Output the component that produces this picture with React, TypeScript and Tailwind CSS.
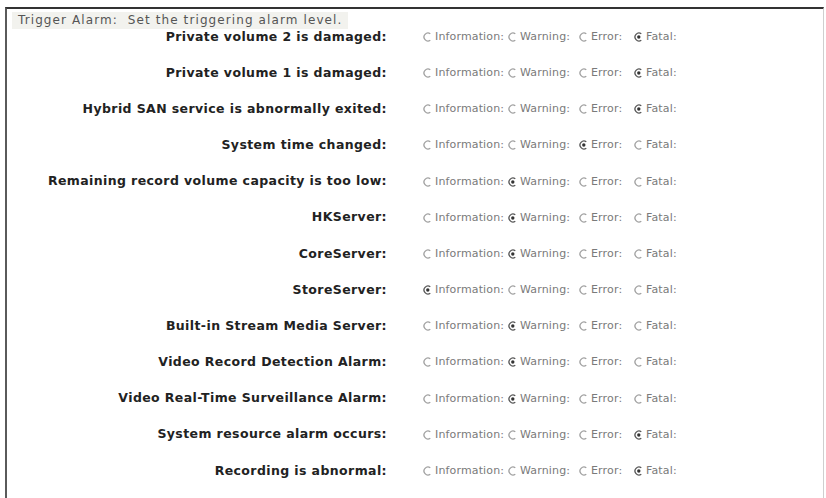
type Level = 'Information' | 'Warning' | 'Error' | 'Fatal';

const levels: { name: Level; w: string }[] = [
  { name: 'Information', w: 'w-[85px]' },
  { name: 'Warning', w: 'w-[71px]' },
  { name: 'Error', w: 'w-[55px]' },
  { name: 'Fatal', w: 'w-[60px]' },
];

const alarms: [string, Level][] = [
  ['Private volume 2 is damaged:', 'Fatal'],
  ['Private volume 1 is damaged:', 'Fatal'],
  ['Hybrid SAN service is abnormally exited:', 'Fatal'],
  ['System time changed:', 'Error'],
  ['Remaining record volume capacity is too low:', 'Warning'],
  ['HKServer:', 'Warning'],
  ['CoreServer:', 'Warning'],
  ['StoreServer:', 'Information'],
  ['Built-in Stream Media Server:', 'Warning'],
  ['Video Record Detection Alarm:', 'Warning'],
  ['Video Real-Time Surveillance Alarm:', 'Warning'],
  ['System resource alarm occurs:', 'Fatal'],
  ['Recording is abnormal:', 'Fatal'],
];

// old-style radio: only the left arc shows, plus a dot when picked
const Radio = ({ on }: { on: boolean }) => (
  <svg width="9" height="10" viewBox="0 0 9 10" className="shrink-0">
    <path
      d="M7.3 1.7 A4 4 0 1 0 7.3 8.3"
      fill="none"
      stroke={on ? '#555' : '#a0a0a0'}
      strokeWidth="1.3"
    />
    {on && <circle cx="4.8" cy="5" r="1.7" fill="#333" />}
  </svg>
);

const AlarmRow = ({ label, value }: { label: string; value: Level }) => (
  <div className="flex h-[36.17px] items-start">
    <div className="flex h-[16px] items-center">
      <div className="w-[381px] shrink-0 pr-px text-right text-[12.5px] font-bold tracking-[0.4px] text-[#222]">
        {label}
      </div>
      <div className="ml-[35px] flex items-center">
        {levels.map(l => (
          <label key={l.name} className={`${l.w} flex items-center gap-[3px]`}>
            <Radio on={l.name === value} />
            <span className="text-[11px] leading-[16px] tracking-[0.15px] text-[#7a7a7a]">{l.name}:</span>
          </label>
        ))}
      </div>
    </div>
  </div>
);

export default function App() {
  return (
    <div
      className="h-[498px] w-[826px] overflow-hidden bg-white pl-[5px] pt-[7px]"
      style={{ fontFamily: '"DejaVu Sans", Verdana, sans-serif' }}
    >
      <div className="h-[520px] w-[819px] border-l-2 border-r border-t-2 border-l-[#5a5a5a] border-r-[#cfcfcf] border-t-[#333]">
        <div className="ml-[5px] mt-[3px] h-[17px] w-fit bg-[#f2f2ee] px-[6px] text-[12px] leading-[17px] tracking-[1.1px] text-[#555]">
          Trigger Alarm:&nbsp; Set the triggering alarm level.
        </div>
        {alarms.map(([label, value]) => (
          <AlarmRow key={label} label={label} value={value} />
        ))}
      </div>
    </div>
  );
}
